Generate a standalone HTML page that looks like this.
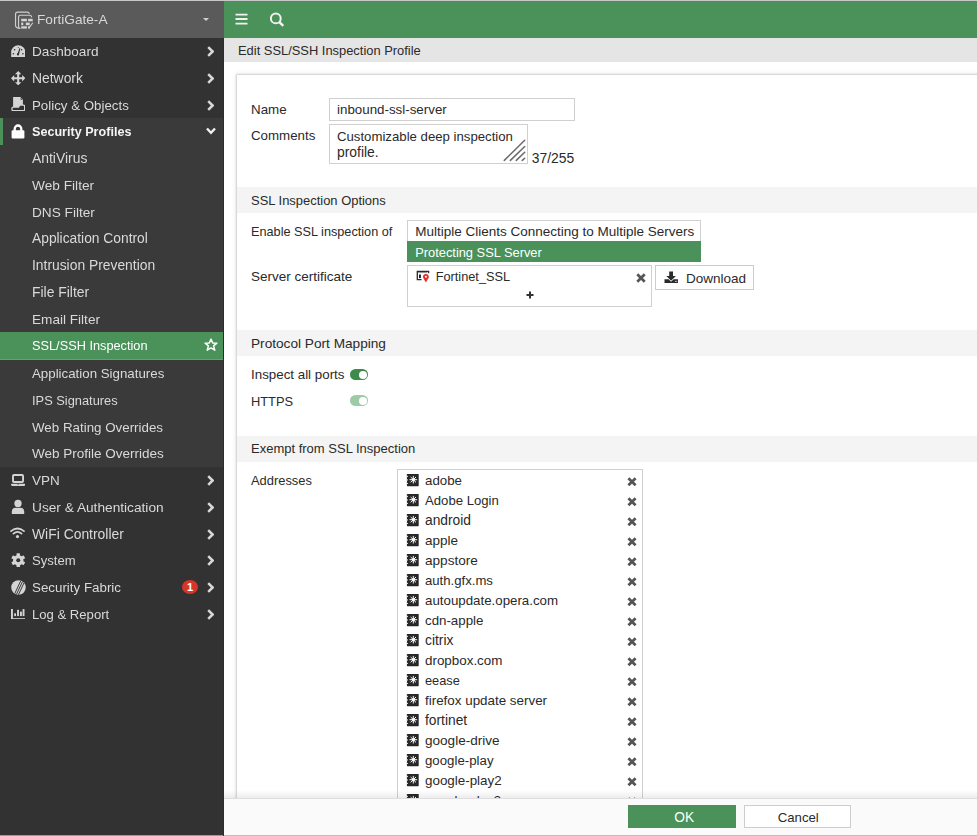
<!DOCTYPE html>
<html><head><meta charset="utf-8"><style>
*{box-sizing:border-box;margin:0;padding:0}
html,body{width:977px;height:836px;overflow:hidden;background:#fff;font-family:"Liberation Sans",sans-serif;font-size:13.3px;color:#333}
.a{position:absolute}
.nw{white-space:nowrap}
.chev{position:absolute;left:207px;width:7px;height:11px}
.band{position:absolute;left:237px;width:740px;height:25.5px;background:#f4f4f4}
.inp{position:absolute;border:1px solid #d0d0d0;background:#fff}
.btn{position:absolute;top:805px;height:23px}
</style></head><body>
<div class="a" style="left:0;top:0;width:977px;height:1px;background:#c8c8c8"></div>
<div class="a" style="left:0;top:1px;width:224px;height:835px;background:#323232"></div>
<div class="a" style="left:0;top:1px;width:224px;height:37px;background:#5a5a5a"></div>
<div class="a" style="left:224px;top:1px;width:753px;height:37px;background:#4a925a"></div>
<div class="a" style="left:224px;top:38px;width:753px;height:23.5px;background:#e5e5e5"></div>
<div class="a nw" style="left:238px;top:45px;font-size:12.9px;line-height:1;color:#2a2a2a;">Edit SSL/SSH Inspection Profile</div>
<div class="a nw" style="left:37px;top:13px;font-size:13.65px;line-height:1;color:#d8d8d8;will-change:transform;">FortiGate-A</div>
<div class="a" style="left:203px;top:17.5px;width:0;height:0;border-left:3.2px solid transparent;border-right:3.2px solid transparent;border-top:3.8px solid #d0d0d0"></div>
<div class="a" style="left:0;top:118px;width:223px;height:348.75px;background:#3a3a3a"></div>
<div class="a" style="left:0;top:118px;width:3px;height:27px;background:#4a925a"></div>
<div class="a" style="left:0;top:332px;width:223px;height:27px;background:#4a925a"></div>
<div class="a" style="left:0;top:359px;width:223px;height:1px;background:#8a8a8a"></div>
<div class="a nw" style="left:32px;top:45px;font-size:13.6px;line-height:1;color:#d9d9d9;will-change:transform;">Dashboard</div>
<svg class="chev" style="top:45.5px" viewBox="0 0 7 11"><path d="M1.2 1.2 L5.6 5.5 L1.2 9.8" fill="none" stroke="#d8d8d8" stroke-width="2.5"/></svg>
<div class="a nw" style="left:32px;top:72px;font-size:13.9px;line-height:1;color:#d9d9d9;will-change:transform;">Network</div>
<svg class="chev" style="top:72.5px" viewBox="0 0 7 11"><path d="M1.2 1.2 L5.6 5.5 L1.2 9.8" fill="none" stroke="#d8d8d8" stroke-width="2.5"/></svg>
<div class="a nw" style="left:32px;top:99px;font-size:13.3px;line-height:1;color:#d9d9d9;will-change:transform;">Policy &amp; Objects</div>
<svg class="chev" style="top:99.5px" viewBox="0 0 7 11"><path d="M1.2 1.2 L5.6 5.5 L1.2 9.8" fill="none" stroke="#d8d8d8" stroke-width="2.5"/></svg>
<div class="a nw" style="left:32px;top:126px;font-size:12.6px;line-height:1;color:#f4f4f4;font-weight:bold;will-change:transform;">Security Profiles</div>
<svg class="a" style="left:206px;top:127px;width:10px;height:8px" viewBox="0 0 10 8"><path d="M1 1.5 L5 5.8 L9 1.5" fill="none" stroke="#f0f0f0" stroke-width="2.4"/></svg>
<div class="a nw" style="left:32px;top:152px;font-size:13.9px;line-height:1;color:#d9d9d9;will-change:transform;">AntiVirus</div>
<div class="a nw" style="left:32px;top:179px;font-size:13.7px;line-height:1;color:#d9d9d9;will-change:transform;">Web Filter</div>
<div class="a nw" style="left:32px;top:206px;font-size:13.65px;line-height:1;color:#d9d9d9;will-change:transform;">DNS Filter</div>
<div class="a nw" style="left:32px;top:232px;font-size:13.8px;line-height:1;color:#d9d9d9;will-change:transform;">Application Control</div>
<div class="a nw" style="left:32px;top:259px;font-size:13.85px;line-height:1;color:#d9d9d9;will-change:transform;">Intrusion Prevention</div>
<div class="a nw" style="left:32px;top:286px;font-size:13.9px;line-height:1;color:#d9d9d9;will-change:transform;">File Filter</div>
<div class="a nw" style="left:32px;top:313px;font-size:13.6px;line-height:1;color:#d9d9d9;will-change:transform;">Email Filter</div>
<div class="a nw" style="left:32px;top:340px;font-size:12.75px;line-height:1;color:#fff;will-change:transform;">SSL/SSH Inspection</div>
<div class="a nw" style="left:32px;top:367px;font-size:13.3px;line-height:1;color:#d9d9d9;will-change:transform;">Application Signatures</div>
<div class="a nw" style="left:32px;top:395px;font-size:12.85px;line-height:1;color:#d9d9d9;will-change:transform;">IPS Signatures</div>
<div class="a nw" style="left:32px;top:421px;font-size:13.35px;line-height:1;color:#d9d9d9;will-change:transform;">Web Rating Overrides</div>
<div class="a nw" style="left:32px;top:447px;font-size:13.5px;line-height:1;color:#d9d9d9;will-change:transform;">Web Profile Overrides</div>
<div class="a nw" style="left:32px;top:474px;font-size:13.45px;line-height:1;color:#d9d9d9;will-change:transform;">VPN</div>
<svg class="chev" style="top:474.5px" viewBox="0 0 7 11"><path d="M1.2 1.2 L5.6 5.5 L1.2 9.8" fill="none" stroke="#d8d8d8" stroke-width="2.5"/></svg>
<div class="a nw" style="left:32px;top:501px;font-size:13.7px;line-height:1;color:#d9d9d9;will-change:transform;">User &amp; Authentication</div>
<svg class="chev" style="top:501.5px" viewBox="0 0 7 11"><path d="M1.2 1.2 L5.6 5.5 L1.2 9.8" fill="none" stroke="#d8d8d8" stroke-width="2.5"/></svg>
<div class="a nw" style="left:32px;top:528px;font-size:13.9px;line-height:1;color:#d9d9d9;will-change:transform;">WiFi Controller</div>
<svg class="chev" style="top:528.5px" viewBox="0 0 7 11"><path d="M1.2 1.2 L5.6 5.5 L1.2 9.8" fill="none" stroke="#d8d8d8" stroke-width="2.5"/></svg>
<div class="a nw" style="left:32px;top:554px;font-size:13.1px;line-height:1;color:#d9d9d9;will-change:transform;">System</div>
<svg class="chev" style="top:554.5px" viewBox="0 0 7 11"><path d="M1.2 1.2 L5.6 5.5 L1.2 9.8" fill="none" stroke="#d8d8d8" stroke-width="2.5"/></svg>
<div class="a nw" style="left:32px;top:581px;font-size:13.35px;line-height:1;color:#d9d9d9;will-change:transform;">Security Fabric</div>
<svg class="chev" style="top:581.5px" viewBox="0 0 7 11"><path d="M1.2 1.2 L5.6 5.5 L1.2 9.8" fill="none" stroke="#d8d8d8" stroke-width="2.5"/></svg>
<div class="a nw" style="left:32px;top:608px;font-size:13.1px;line-height:1;color:#d9d9d9;will-change:transform;">Log &amp; Report</div>
<svg class="chev" style="top:608.5px" viewBox="0 0 7 11"><path d="M1.2 1.2 L5.6 5.5 L1.2 9.8" fill="none" stroke="#d8d8d8" stroke-width="2.5"/></svg>
<div class="a" style="left:237px;top:75px;width:760px;height:740px;background:#fff;box-shadow:-1px -1px 1.5px rgba(0,0,0,.16),-2px -2px 5px rgba(0,0,0,.05)"></div>
<div class="a nw" style="left:251px;top:103px;font-size:13.35px;line-height:1;color:#2a2a2a;">Name</div>
<div class="a nw" style="left:251px;top:129px;font-size:13.3px;line-height:1;color:#2a2a2a;">Comments</div>
<div class="inp" style="left:329px;top:98px;width:246px;height:22.5px"></div>
<div class="a nw" style="left:337px;top:103px;font-size:13.35px;line-height:1;color:#2a2a2a;">inbound-ssl-server</div>
<div class="inp" style="left:329px;top:124px;width:199px;height:39.5px"></div>
<div class="a nw" style="left:337px;top:130px;font-size:13.2px;line-height:1;color:#2a2a2a;">Customizable deep inspection</div>
<div class="a nw" style="left:337px;top:146px;font-size:13.9px;line-height:1;color:#2a2a2a;">profile.</div>
<svg class="a" style="left:500px;top:136px;width:28px;height:28px" viewBox="0 0 28 28"><path d="M4.3 24.4 L24.7 4.3 M10.4 24.4 L24.7 10.5 M16.3 24.4 L24.7 16.3 M22.3 24.4 L24.7 22.2" stroke="#6b6b6b" stroke-width="1.5" stroke-linecap="round"/></svg>
<div class="a nw" style="left:531.8px;top:152px;font-size:13.9px;line-height:1;color:#2a2a2a;">37/255</div>
<div class="band" style="top:187px"></div>
<div class="a nw" style="left:251px;top:195px;font-size:12.95px;line-height:1;color:#2a2a2a;">SSL Inspection Options</div>
<div class="a nw" style="left:251px;top:226px;font-size:12.7px;line-height:1;color:#2a2a2a;">Enable SSL inspection of</div>
<div class="inp" style="left:407px;top:220px;width:294px;height:22px"></div>
<div class="a nw" style="left:415.2px;top:225px;font-size:13.5px;line-height:1;color:#2a2a2a;">Multiple Clients Connecting to Multiple Servers</div>
<div class="a" style="left:407px;top:241px;width:294px;height:21px;background:#4a925a"></div>
<div class="a nw" style="left:415.2px;top:247px;font-size:12.85px;line-height:1;color:#fff;">Protecting SSL Server</div>
<div class="a nw" style="left:251px;top:270px;font-size:13.5px;line-height:1;color:#2a2a2a;">Server certificate</div>
<div class="inp" style="left:407px;top:265px;width:245px;height:41.5px"></div>
<div class="a nw" style="left:435.7px;top:271px;font-size:12.75px;line-height:1;color:#2a2a2a;">Fortinet_SSL</div>
<svg class="a" style="left:416px;top:269.5px;width:14px;height:13px" viewBox="0 0 14 13"><path d="M5.5 9.7 H1.3 V1.3 H12.6 V3.2" fill="none" stroke="#2a2a2a" stroke-width="1.3"/><rect x="2.2" y="2.1" width="9" height="1" fill="#8a8a8a"/><rect x="3" y="4.5" width="1.9" height="3.6" fill="#1e1e2a"/><path d="M9.9 12.4 L7.3 8.1 A2.9 2.9 0 1 1 12.5 8.1 Z" fill="#e0302a"/><circle cx="9.9" cy="6.7" r="0.95" fill="#fff"/></svg>
<svg class="a" style="left:636px;top:272.5px;width:10px;height:10px" viewBox="0 0 10 10"><path d="M1.3 1.3 L8.7 8.7 M8.7 1.3 L1.3 8.7" stroke="#555" stroke-width="2.7"/></svg>
<svg class="a" style="left:525.5px;top:291px;width:8px;height:8px" viewBox="0 0 8 8"><path d="M4 0.5 V7.5 M0.5 4 H7.5" stroke="#333" stroke-width="2"/></svg>
<div class="inp" style="left:655px;top:265px;width:99px;height:25px;border-color:#cccccc"></div>
<svg class="a" style="left:663.5px;top:270.5px;width:15px;height:13px" viewBox="0 0 15 13"><rect x="5.2" y="0.5" width="3.8" height="5" fill="#2b2b2b"/><path d="M2.4 5 H11.8 L7.1 9.8Z" fill="#2b2b2b"/><path d="M0.5 8.2 H4.6 L7.1 10.7 L9.6 8.2 H14 V12 H0.5Z" fill="#2b2b2b"/><circle cx="11.4" cy="10.2" r="0.55" fill="#fff"/><circle cx="12.8" cy="10.2" r="0.55" fill="#fff"/></svg>
<div class="a nw" style="left:686px;top:272px;font-size:13.5px;line-height:1;color:#2a2a2a;">Download</div>
<div class="band" style="top:330px"></div>
<div class="a nw" style="left:251px;top:337px;font-size:13.65px;line-height:1;color:#2a2a2a;">Protocol Port Mapping</div>
<div class="a nw" style="left:251px;top:368px;font-size:13.35px;line-height:1;color:#2a2a2a;">Inspect all ports</div>
<div class="a nw" style="left:251px;top:396px;font-size:12.85px;line-height:1;color:#2a2a2a;">HTTPS</div>
<div class="a" style="left:349.5px;top:369px;width:18.5px;height:11px;border-radius:6px;background:#3d8a4c"></div>
<div class="a" style="left:358.5px;top:370.5px;width:8px;height:8px;border-radius:50%;background:#fff"></div>
<div class="a" style="left:349.5px;top:395px;width:18.5px;height:11px;border-radius:6px;background:#9ecba7"></div>
<div class="a" style="left:358.5px;top:396.5px;width:8px;height:8px;border-radius:50%;background:#fff"></div>
<div class="band" style="top:436.3px"></div>
<div class="a nw" style="left:251px;top:442px;font-size:13.0px;line-height:1;color:#2a2a2a;">Exempt from SSL Inspection</div>
<div class="a nw" style="left:251px;top:475px;font-size:12.9px;line-height:1;color:#2a2a2a;">Addresses</div>
<div class="inp" style="left:397px;top:469px;width:246px;height:400px"></div>
<div class="a nw" style="left:425px;top:474px;font-size:13.3px;line-height:1;color:#2a2a2a;">adobe</div>
<svg class="a" style="left:406.3px;top:474.20px;width:13px;height:13px" viewBox="0 0 13 13"><rect x="0.9" y="0" width="11.8" height="12.2" rx="0.6" fill="#272727"/><g fill="#e8e8e8"><circle cx="1.4" cy="2.4" r="0.6"/><circle cx="1.4" cy="5.9" r="0.6"/><circle cx="1.4" cy="9.4" r="0.6"/></g><g stroke="#fff" stroke-width="1"><path d="M7.3 1.9 V9.5 M3.5 5.7 H11.1 M4.6 3 L10 8.4 M10 3 L4.6 8.4"/></g><circle cx="7.3" cy="5.7" r="1.5" fill="#fff"/></svg>
<svg class="a" style="left:627px;top:476.8px;width:10px;height:9.5px" viewBox="0 0 10 9.5"><path d="M1.4 1.2 L8.6 8.3 M8.6 1.2 L1.4 8.3" stroke="#555" stroke-width="2.7"/></svg>
<div class="a nw" style="left:425px;top:494px;font-size:13.15px;line-height:1;color:#2a2a2a;">Adobe Login</div>
<svg class="a" style="left:406.3px;top:494.20px;width:13px;height:13px" viewBox="0 0 13 13"><rect x="0.9" y="0" width="11.8" height="12.2" rx="0.6" fill="#272727"/><g fill="#e8e8e8"><circle cx="1.4" cy="2.4" r="0.6"/><circle cx="1.4" cy="5.9" r="0.6"/><circle cx="1.4" cy="9.4" r="0.6"/></g><g stroke="#fff" stroke-width="1"><path d="M7.3 1.9 V9.5 M3.5 5.7 H11.1 M4.6 3 L10 8.4 M10 3 L4.6 8.4"/></g><circle cx="7.3" cy="5.7" r="1.5" fill="#fff"/></svg>
<svg class="a" style="left:627px;top:496.8px;width:10px;height:9.5px" viewBox="0 0 10 9.5"><path d="M1.4 1.2 L8.6 8.3 M8.6 1.2 L1.4 8.3" stroke="#555" stroke-width="2.7"/></svg>
<div class="a nw" style="left:425px;top:514px;font-size:13.8px;line-height:1;color:#2a2a2a;">android</div>
<svg class="a" style="left:406.3px;top:514.20px;width:13px;height:13px" viewBox="0 0 13 13"><rect x="0.9" y="0" width="11.8" height="12.2" rx="0.6" fill="#272727"/><g fill="#e8e8e8"><circle cx="1.4" cy="2.4" r="0.6"/><circle cx="1.4" cy="5.9" r="0.6"/><circle cx="1.4" cy="9.4" r="0.6"/></g><g stroke="#fff" stroke-width="1"><path d="M7.3 1.9 V9.5 M3.5 5.7 H11.1 M4.6 3 L10 8.4 M10 3 L4.6 8.4"/></g><circle cx="7.3" cy="5.7" r="1.5" fill="#fff"/></svg>
<svg class="a" style="left:627px;top:516.8px;width:10px;height:9.5px" viewBox="0 0 10 9.5"><path d="M1.4 1.2 L8.6 8.3 M8.6 1.2 L1.4 8.3" stroke="#555" stroke-width="2.7"/></svg>
<div class="a nw" style="left:425px;top:534px;font-size:13.5px;line-height:1;color:#2a2a2a;">apple</div>
<svg class="a" style="left:406.3px;top:534.20px;width:13px;height:13px" viewBox="0 0 13 13"><rect x="0.9" y="0" width="11.8" height="12.2" rx="0.6" fill="#272727"/><g fill="#e8e8e8"><circle cx="1.4" cy="2.4" r="0.6"/><circle cx="1.4" cy="5.9" r="0.6"/><circle cx="1.4" cy="9.4" r="0.6"/></g><g stroke="#fff" stroke-width="1"><path d="M7.3 1.9 V9.5 M3.5 5.7 H11.1 M4.6 3 L10 8.4 M10 3 L4.6 8.4"/></g><circle cx="7.3" cy="5.7" r="1.5" fill="#fff"/></svg>
<svg class="a" style="left:627px;top:536.8px;width:10px;height:9.5px" viewBox="0 0 10 9.5"><path d="M1.4 1.2 L8.6 8.3 M8.6 1.2 L1.4 8.3" stroke="#555" stroke-width="2.7"/></svg>
<div class="a nw" style="left:425px;top:554px;font-size:13.6px;line-height:1;color:#2a2a2a;">appstore</div>
<svg class="a" style="left:406.3px;top:554.20px;width:13px;height:13px" viewBox="0 0 13 13"><rect x="0.9" y="0" width="11.8" height="12.2" rx="0.6" fill="#272727"/><g fill="#e8e8e8"><circle cx="1.4" cy="2.4" r="0.6"/><circle cx="1.4" cy="5.9" r="0.6"/><circle cx="1.4" cy="9.4" r="0.6"/></g><g stroke="#fff" stroke-width="1"><path d="M7.3 1.9 V9.5 M3.5 5.7 H11.1 M4.6 3 L10 8.4 M10 3 L4.6 8.4"/></g><circle cx="7.3" cy="5.7" r="1.5" fill="#fff"/></svg>
<svg class="a" style="left:627px;top:556.8px;width:10px;height:9.5px" viewBox="0 0 10 9.5"><path d="M1.4 1.2 L8.6 8.3 M8.6 1.2 L1.4 8.3" stroke="#555" stroke-width="2.7"/></svg>
<div class="a nw" style="left:425px;top:574px;font-size:13.15px;line-height:1;color:#2a2a2a;">auth.gfx.ms</div>
<svg class="a" style="left:406.3px;top:574.20px;width:13px;height:13px" viewBox="0 0 13 13"><rect x="0.9" y="0" width="11.8" height="12.2" rx="0.6" fill="#272727"/><g fill="#e8e8e8"><circle cx="1.4" cy="2.4" r="0.6"/><circle cx="1.4" cy="5.9" r="0.6"/><circle cx="1.4" cy="9.4" r="0.6"/></g><g stroke="#fff" stroke-width="1"><path d="M7.3 1.9 V9.5 M3.5 5.7 H11.1 M4.6 3 L10 8.4 M10 3 L4.6 8.4"/></g><circle cx="7.3" cy="5.7" r="1.5" fill="#fff"/></svg>
<svg class="a" style="left:627px;top:576.8px;width:10px;height:9.5px" viewBox="0 0 10 9.5"><path d="M1.4 1.2 L8.6 8.3 M8.6 1.2 L1.4 8.3" stroke="#555" stroke-width="2.7"/></svg>
<div class="a nw" style="left:425px;top:594px;font-size:13.3px;line-height:1;color:#2a2a2a;">autoupdate.opera.com</div>
<svg class="a" style="left:406.3px;top:594.20px;width:13px;height:13px" viewBox="0 0 13 13"><rect x="0.9" y="0" width="11.8" height="12.2" rx="0.6" fill="#272727"/><g fill="#e8e8e8"><circle cx="1.4" cy="2.4" r="0.6"/><circle cx="1.4" cy="5.9" r="0.6"/><circle cx="1.4" cy="9.4" r="0.6"/></g><g stroke="#fff" stroke-width="1"><path d="M7.3 1.9 V9.5 M3.5 5.7 H11.1 M4.6 3 L10 8.4 M10 3 L4.6 8.4"/></g><circle cx="7.3" cy="5.7" r="1.5" fill="#fff"/></svg>
<svg class="a" style="left:627px;top:596.8px;width:10px;height:9.5px" viewBox="0 0 10 9.5"><path d="M1.4 1.2 L8.6 8.3 M8.6 1.2 L1.4 8.3" stroke="#555" stroke-width="2.7"/></svg>
<div class="a nw" style="left:425px;top:614px;font-size:13.3px;line-height:1;color:#2a2a2a;">cdn-apple</div>
<svg class="a" style="left:406.3px;top:614.20px;width:13px;height:13px" viewBox="0 0 13 13"><rect x="0.9" y="0" width="11.8" height="12.2" rx="0.6" fill="#272727"/><g fill="#e8e8e8"><circle cx="1.4" cy="2.4" r="0.6"/><circle cx="1.4" cy="5.9" r="0.6"/><circle cx="1.4" cy="9.4" r="0.6"/></g><g stroke="#fff" stroke-width="1"><path d="M7.3 1.9 V9.5 M3.5 5.7 H11.1 M4.6 3 L10 8.4 M10 3 L4.6 8.4"/></g><circle cx="7.3" cy="5.7" r="1.5" fill="#fff"/></svg>
<svg class="a" style="left:627px;top:616.8px;width:10px;height:9.5px" viewBox="0 0 10 9.5"><path d="M1.4 1.2 L8.6 8.3 M8.6 1.2 L1.4 8.3" stroke="#555" stroke-width="2.7"/></svg>
<div class="a nw" style="left:425px;top:634px;font-size:13.8px;line-height:1;color:#2a2a2a;">citrix</div>
<svg class="a" style="left:406.3px;top:634.20px;width:13px;height:13px" viewBox="0 0 13 13"><rect x="0.9" y="0" width="11.8" height="12.2" rx="0.6" fill="#272727"/><g fill="#e8e8e8"><circle cx="1.4" cy="2.4" r="0.6"/><circle cx="1.4" cy="5.9" r="0.6"/><circle cx="1.4" cy="9.4" r="0.6"/></g><g stroke="#fff" stroke-width="1"><path d="M7.3 1.9 V9.5 M3.5 5.7 H11.1 M4.6 3 L10 8.4 M10 3 L4.6 8.4"/></g><circle cx="7.3" cy="5.7" r="1.5" fill="#fff"/></svg>
<svg class="a" style="left:627px;top:636.8px;width:10px;height:9.5px" viewBox="0 0 10 9.5"><path d="M1.4 1.2 L8.6 8.3 M8.6 1.2 L1.4 8.3" stroke="#555" stroke-width="2.7"/></svg>
<div class="a nw" style="left:425px;top:654px;font-size:13.4px;line-height:1;color:#2a2a2a;">dropbox.com</div>
<svg class="a" style="left:406.3px;top:654.20px;width:13px;height:13px" viewBox="0 0 13 13"><rect x="0.9" y="0" width="11.8" height="12.2" rx="0.6" fill="#272727"/><g fill="#e8e8e8"><circle cx="1.4" cy="2.4" r="0.6"/><circle cx="1.4" cy="5.9" r="0.6"/><circle cx="1.4" cy="9.4" r="0.6"/></g><g stroke="#fff" stroke-width="1"><path d="M7.3 1.9 V9.5 M3.5 5.7 H11.1 M4.6 3 L10 8.4 M10 3 L4.6 8.4"/></g><circle cx="7.3" cy="5.7" r="1.5" fill="#fff"/></svg>
<svg class="a" style="left:627px;top:656.8px;width:10px;height:9.5px" viewBox="0 0 10 9.5"><path d="M1.4 1.2 L8.6 8.3 M8.6 1.2 L1.4 8.3" stroke="#555" stroke-width="2.7"/></svg>
<div class="a nw" style="left:425px;top:675px;font-size:12.8px;line-height:1;color:#2a2a2a;">eease</div>
<svg class="a" style="left:406.3px;top:674.20px;width:13px;height:13px" viewBox="0 0 13 13"><rect x="0.9" y="0" width="11.8" height="12.2" rx="0.6" fill="#272727"/><g fill="#e8e8e8"><circle cx="1.4" cy="2.4" r="0.6"/><circle cx="1.4" cy="5.9" r="0.6"/><circle cx="1.4" cy="9.4" r="0.6"/></g><g stroke="#fff" stroke-width="1"><path d="M7.3 1.9 V9.5 M3.5 5.7 H11.1 M4.6 3 L10 8.4 M10 3 L4.6 8.4"/></g><circle cx="7.3" cy="5.7" r="1.5" fill="#fff"/></svg>
<svg class="a" style="left:627px;top:676.8px;width:10px;height:9.5px" viewBox="0 0 10 9.5"><path d="M1.4 1.2 L8.6 8.3 M8.6 1.2 L1.4 8.3" stroke="#555" stroke-width="2.7"/></svg>
<div class="a nw" style="left:425px;top:694px;font-size:13.4px;line-height:1;color:#2a2a2a;">firefox update server</div>
<svg class="a" style="left:406.3px;top:694.20px;width:13px;height:13px" viewBox="0 0 13 13"><rect x="0.9" y="0" width="11.8" height="12.2" rx="0.6" fill="#272727"/><g fill="#e8e8e8"><circle cx="1.4" cy="2.4" r="0.6"/><circle cx="1.4" cy="5.9" r="0.6"/><circle cx="1.4" cy="9.4" r="0.6"/></g><g stroke="#fff" stroke-width="1"><path d="M7.3 1.9 V9.5 M3.5 5.7 H11.1 M4.6 3 L10 8.4 M10 3 L4.6 8.4"/></g><circle cx="7.3" cy="5.7" r="1.5" fill="#fff"/></svg>
<svg class="a" style="left:627px;top:696.8px;width:10px;height:9.5px" viewBox="0 0 10 9.5"><path d="M1.4 1.2 L8.6 8.3 M8.6 1.2 L1.4 8.3" stroke="#555" stroke-width="2.7"/></svg>
<div class="a nw" style="left:425px;top:714px;font-size:13.8px;line-height:1;color:#2a2a2a;">fortinet</div>
<svg class="a" style="left:406.3px;top:714.20px;width:13px;height:13px" viewBox="0 0 13 13"><rect x="0.9" y="0" width="11.8" height="12.2" rx="0.6" fill="#272727"/><g fill="#e8e8e8"><circle cx="1.4" cy="2.4" r="0.6"/><circle cx="1.4" cy="5.9" r="0.6"/><circle cx="1.4" cy="9.4" r="0.6"/></g><g stroke="#fff" stroke-width="1"><path d="M7.3 1.9 V9.5 M3.5 5.7 H11.1 M4.6 3 L10 8.4 M10 3 L4.6 8.4"/></g><circle cx="7.3" cy="5.7" r="1.5" fill="#fff"/></svg>
<svg class="a" style="left:627px;top:716.8px;width:10px;height:9.5px" viewBox="0 0 10 9.5"><path d="M1.4 1.2 L8.6 8.3 M8.6 1.2 L1.4 8.3" stroke="#555" stroke-width="2.7"/></svg>
<div class="a nw" style="left:425px;top:734px;font-size:13.55px;line-height:1;color:#2a2a2a;">google-drive</div>
<svg class="a" style="left:406.3px;top:734.20px;width:13px;height:13px" viewBox="0 0 13 13"><rect x="0.9" y="0" width="11.8" height="12.2" rx="0.6" fill="#272727"/><g fill="#e8e8e8"><circle cx="1.4" cy="2.4" r="0.6"/><circle cx="1.4" cy="5.9" r="0.6"/><circle cx="1.4" cy="9.4" r="0.6"/></g><g stroke="#fff" stroke-width="1"><path d="M7.3 1.9 V9.5 M3.5 5.7 H11.1 M4.6 3 L10 8.4 M10 3 L4.6 8.4"/></g><circle cx="7.3" cy="5.7" r="1.5" fill="#fff"/></svg>
<svg class="a" style="left:627px;top:736.8px;width:10px;height:9.5px" viewBox="0 0 10 9.5"><path d="M1.4 1.2 L8.6 8.3 M8.6 1.2 L1.4 8.3" stroke="#555" stroke-width="2.7"/></svg>
<div class="a nw" style="left:425px;top:754px;font-size:13.25px;line-height:1;color:#2a2a2a;">google-play</div>
<svg class="a" style="left:406.3px;top:754.20px;width:13px;height:13px" viewBox="0 0 13 13"><rect x="0.9" y="0" width="11.8" height="12.2" rx="0.6" fill="#272727"/><g fill="#e8e8e8"><circle cx="1.4" cy="2.4" r="0.6"/><circle cx="1.4" cy="5.9" r="0.6"/><circle cx="1.4" cy="9.4" r="0.6"/></g><g stroke="#fff" stroke-width="1"><path d="M7.3 1.9 V9.5 M3.5 5.7 H11.1 M4.6 3 L10 8.4 M10 3 L4.6 8.4"/></g><circle cx="7.3" cy="5.7" r="1.5" fill="#fff"/></svg>
<svg class="a" style="left:627px;top:756.8px;width:10px;height:9.5px" viewBox="0 0 10 9.5"><path d="M1.4 1.2 L8.6 8.3 M8.6 1.2 L1.4 8.3" stroke="#555" stroke-width="2.7"/></svg>
<div class="a nw" style="left:425px;top:774px;font-size:13.4px;line-height:1;color:#2a2a2a;">google-play2</div>
<svg class="a" style="left:406.3px;top:774.20px;width:13px;height:13px" viewBox="0 0 13 13"><rect x="0.9" y="0" width="11.8" height="12.2" rx="0.6" fill="#272727"/><g fill="#e8e8e8"><circle cx="1.4" cy="2.4" r="0.6"/><circle cx="1.4" cy="5.9" r="0.6"/><circle cx="1.4" cy="9.4" r="0.6"/></g><g stroke="#fff" stroke-width="1"><path d="M7.3 1.9 V9.5 M3.5 5.7 H11.1 M4.6 3 L10 8.4 M10 3 L4.6 8.4"/></g><circle cx="7.3" cy="5.7" r="1.5" fill="#fff"/></svg>
<svg class="a" style="left:627px;top:776.8px;width:10px;height:9.5px" viewBox="0 0 10 9.5"><path d="M1.4 1.2 L8.6 8.3 M8.6 1.2 L1.4 8.3" stroke="#555" stroke-width="2.7"/></svg>
<div class="a nw" style="left:425px;top:794px;font-size:13.3px;line-height:1;color:#2a2a2a;">google-play3</div>
<svg class="a" style="left:406.3px;top:794.20px;width:13px;height:13px" viewBox="0 0 13 13"><rect x="0.9" y="0" width="11.8" height="12.2" rx="0.6" fill="#272727"/><g fill="#e8e8e8"><circle cx="1.4" cy="2.4" r="0.6"/><circle cx="1.4" cy="5.9" r="0.6"/><circle cx="1.4" cy="9.4" r="0.6"/></g><g stroke="#fff" stroke-width="1"><path d="M7.3 1.9 V9.5 M3.5 5.7 H11.1 M4.6 3 L10 8.4 M10 3 L4.6 8.4"/></g><circle cx="7.3" cy="5.7" r="1.5" fill="#fff"/></svg>
<svg class="a" style="left:627px;top:796.8px;width:10px;height:9.5px" viewBox="0 0 10 9.5"><path d="M1.4 1.2 L8.6 8.3 M8.6 1.2 L1.4 8.3" stroke="#555" stroke-width="2.7"/></svg>
<svg class="a" style="left:14px;top:10.5px;width:20px;height:18px" viewBox="0 0 20 18"><g fill="none" stroke="#d0d0d0" stroke-width="1.15"><path d="M5.3 17.4 Q1.55 16.6 1.55 14.5 V3 Q1.55 1.05 3.5 1.05 H13.2 Q15 1.05 15.3 3"/><path d="M6.4 17.6 Q4.55 17.3 4.55 15.5 V6.2 Q4.55 4.25 6.5 4.25 H15.8 Q17.6 4.25 17.6 6.3"/></g><g fill="#d4d4d4"><rect x="7.2" y="7.8" width="5.7" height="2.5"/><rect x="14.1" y="7.8" width="4.6" height="2.5"/><rect x="7.2" y="11.6" width="2.1" height="2.6"/><rect x="11.8" y="11.6" width="3.9" height="2.6"/><rect x="7.2" y="15.3" width="5.7" height="2.3"/><rect x="14.1" y="15.3" width="1.8" height="2.3"/><path d="M14.6 17.4 L15.1 15.8 L18.3 11.4 L19.2 12.1 L16 16.6 Z"/></g></svg>
<svg class="a" style="left:235.2px;top:13px;width:13px;height:12px" viewBox="0 0 13 12"><path d="M0.5 1.6 H12.5 M0.5 6 H12.5 M0.5 10.6 H12.5" stroke="#f2f2f2" stroke-width="1.9"/></svg>
<svg class="a" style="left:268px;top:10.5px;width:17px;height:16px" viewBox="0 0 17 16"><circle cx="7.8" cy="7.4" r="4.9" fill="none" stroke="#f2f2f2" stroke-width="2"/><path d="M11.2 11 L15.3 14.8" stroke="#f2f2f2" stroke-width="2.4"/></svg>
<svg class="a" style="left:10.8px;top:44.8px;width:14.6px;height:12.4px" viewBox="0 0 14.6 12.4"><path d="M0.2 12.2 V7.3 A7.1 7.1 0 0 1 14.4 7.3 V12.2 Z" fill="#d4d4d4"/><g fill="#2e2e2e"><circle cx="3.6" cy="4.7" r="0.8"/><circle cx="10.6" cy="4.7" r="0.8"/><circle cx="2.4" cy="8.7" r="0.8"/><circle cx="11.9" cy="8.7" r="0.8"/><path d="M6.2 9.4 L8.6 3 L9.4 3.3 L7.9 9.8Z"/><circle cx="7" cy="9.4" r="1.1"/><circle cx="7.2" cy="2.6" r="0.5"/></g></svg>
<svg class="a" style="left:10.75px;top:70.75px;width:14.4px;height:14.4px" viewBox="0 0 14.35 14.35"><path d="M7.17 0 L10.35 3.2 H8.2 V6.14 H11.15 V4 L14.35 7.17 L11.15 10.35 V8.2 H8.2 V11.15 H10.35 L7.17 14.35 L4 11.15 H6.14 V8.2 H3.2 V10.35 L0 7.17 L3.2 4 V6.14 H6.14 V3.2 H4 Z" fill="#d4d4d4"/></svg>
<svg class="a" style="left:10.8px;top:96.8px;width:14.6px;height:14.6px" viewBox="0 0 14.6 14.6"><path d="M2.1 0.1 H9.4 L11.9 2.7 V8.15 H8.6 L7.6 10.15 H2.1 Z" fill="#d4d4d4"/><path d="M9.6 0.7 V2.8 H11.5 Z" fill="#2e2e2e"/><path d="M2.2 10.15 H7.6 L8.6 8.15 H12.4 Q13.65 8.15 13.65 9.4 V12.4 Q13.65 13.65 12.4 13.65 H2.2 Q0.95 13.65 0.95 12.4 V11.4 Q0.95 10.15 2.2 10.15 Z" fill="#323232" stroke="#d4d4d4" stroke-width="1.3"/></svg>
<svg class="a" style="left:11px;top:123.5px;width:14px;height:15.5px" viewBox="0 0 14 15.5"><path d="M3.7 7 V4.8 A3.3 3.3 0 0 1 10.3 4.8 V7" fill="none" stroke="#fff" stroke-width="2.3"/><rect x="0.6" y="6.2" width="12.8" height="8.3" rx="1.2" fill="#fff"/></svg>
<svg class="a" style="left:10.9px;top:473.9px;width:14.3px;height:12px" viewBox="0 0 14.3 12"><rect x="2" y="0.95" width="10.05" height="7.1" rx="1" fill="none" stroke="#d4d4d4" stroke-width="1.9"/><path d="M0.4 9.85 H13.9 Q14.3 9.85 14.3 10.3 Q14.3 12 12.9 12 H1.4 Q0 12 0 10.3 Q0 9.85 0.4 9.85 Z" fill="#d4d4d4"/><rect x="6.3" y="9.85" width="1.7" height="0.6" fill="#333"/></svg>
<svg class="a" style="left:11px;top:499px;width:14px;height:15.5px" viewBox="0 0 14 15.5"><circle cx="7" cy="4.45" r="3.65" fill="#d4d4d4"/><path d="M0.8 15 V12.6 Q0.8 8.8 4.5 8.8 H9.5 Q13.2 8.8 13.2 12.6 V15Z" fill="#d4d4d4"/></svg>
<svg class="a" style="left:10.05px;top:527px;width:15px;height:11.5px" viewBox="0 0 15 11.5"><g fill="none" stroke="#d4d4d4" stroke-width="1.7" stroke-linecap="round"><path d="M1 4.2 Q7.5 -1.2 14 4.2"/><path d="M3.4 6.6 Q7.5 3 11.6 6.6"/></g><circle cx="7.5" cy="9.6" r="1.6" fill="#d4d4d4"/></svg>
<svg class="a" style="left:10.8px;top:552.7px;width:14.5px;height:14.5px" viewBox="-7.25 -7.25 14.5 14.5"><g fill="#d4d4d4"><circle r="5.2"/><g id="gt"><rect x="-1.7" y="-7.1" width="3.4" height="3" rx="0.6"/></g><use href="#gt" transform="rotate(60)"/><use href="#gt" transform="rotate(120)"/><use href="#gt" transform="rotate(180)"/><use href="#gt" transform="rotate(240)"/><use href="#gt" transform="rotate(300)"/></g><circle r="2" fill="#333"/></svg>
<svg class="a" style="left:10.6px;top:579.6px;width:15px;height:15px" viewBox="0 0 15 15"><defs><clipPath id="cc"><circle cx="7.5" cy="7.5" r="7.25"/></clipPath></defs><circle cx="7.5" cy="7.5" r="7.25" fill="#d4d4d4"/><g clip-path="url(#cc)" stroke="#333" stroke-width="0.95"><path d="M2.6 16 L10.6 -1 M4.7 16 L12.7 -1 M6.8 16 L14.8 -1"/></g></svg>
<svg class="a" style="left:11px;top:608.7px;width:14.2px;height:10.7px" viewBox="0 0 14.2 10.7"><g fill="#d4d4d4"><rect x="0" y="0" width="1.9" height="10.6"/><rect x="0" y="9.2" width="14.1" height="1.4"/><rect x="3.2" y="4.3" width="1.8" height="2.8"/><rect x="6.1" y="0.8" width="1.9" height="6.3"/><rect x="9" y="2.6" width="1.9" height="4.5"/><rect x="11.6" y="0.1" width="1.9" height="7"/></g></svg>
<svg class="a" style="left:204px;top:338.3px;width:14px;height:13.6px" viewBox="0 0 14 13.6"><path d="M7 1.1 L8.7 5 L12.9 5.2 L9.6 7.9 L10.8 12.2 L7 9.9 L3.2 12.2 L4.4 7.9 L1.1 5.2 L5.3 5Z" fill="none" stroke="#fff" stroke-width="1.5" stroke-linejoin="round"/></svg>
<div class="a" style="left:182px;top:580px;width:16px;height:14px;border-radius:50%;background:#d8352a"></div>
<div class="a" style="left:182px;top:580px;width:16px;height:14px;text-align:center;color:#fff;font-size:11px;line-height:14px;font-weight:bold">1</div>
<div class="a" style="left:224px;top:790px;width:753px;height:8px;background:linear-gradient(rgba(0,0,0,0),rgba(0,0,0,.07))"></div>
<div class="a" style="left:224px;top:797.5px;width:753px;height:38.5px;background:#fafafa;border-top:1px solid #dedede"></div>
<div class="a" style="left:224px;top:834.5px;width:753px;height:1.5px;background:#bdbdbd"></div>
<div class="a" style="left:0;top:835px;width:223px;height:1px;background:#9a9a9a"></div>
<div class="a" style="left:223px;top:38px;width:1px;height:797px;background:#2c2c2c"></div>
<div class="btn" style="left:628px;width:108px;background:#4a925a"></div>
<div class="a nw" style="left:674.3px;top:811px;font-size:13.75px;line-height:1;color:#fff;">OK</div>
<div class="btn" style="left:744px;width:107px;background:#fff;border:1px solid #cdcdcd"></div>
<div class="a nw" style="left:777.7px;top:811px;font-size:13.2px;line-height:1;color:#2a2a2a;">Cancel</div>
</body></html>
